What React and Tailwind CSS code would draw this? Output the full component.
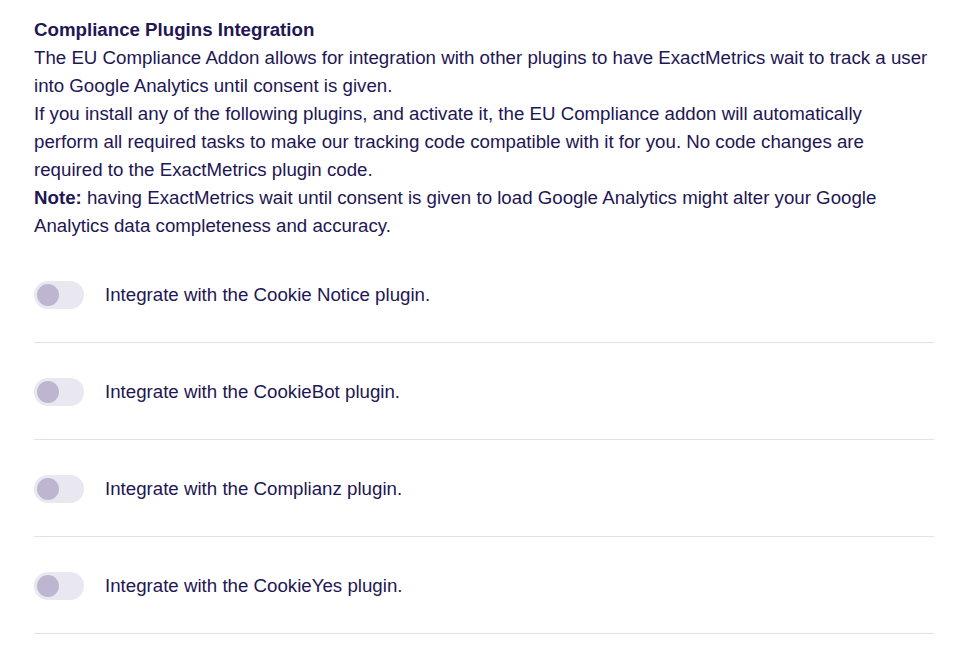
import React from 'react';

const plugins = ['Cookie Notice', 'CookieBot', 'Complianz', 'CookieYes'];

const Toggle = () => (
    <div className="w-[50px] h-[28px] rounded-full bg-[#e9e7f0] flex items-center px-[3px] shrink-0">
        <div className="w-[22px] h-[22px] rounded-full bg-[#bcb6d1]"></div>
    </div>
);

const App = () => {
    return (
        <div className="bg-white min-h-screen pl-[34px] pt-[16px] text-[#221654] text-[18.7px] leading-[28px]" style={{ fontFamily: '"Liberation Sans", Arial, sans-serif' }}>
            <div className="w-[900px]">
                <div className="w-[895px]">
                    <h2 className="font-bold">Compliance Plugins Integration</h2>
                    <p>The EU Compliance Addon allows for integration with other plugins to have ExactMetrics wait to track a user into Google Analytics until consent is given.</p>
                    <p>If you install any of the following plugins, and activate it, the EU Compliance addon will automatically perform all required tasks to make our tracking code compatible with it for you. No code changes are required to the ExactMetrics plugin code.</p>
                    <p><strong>Note:</strong> having ExactMetrics wait until consent is given to load Google Analytics might alter your Google Analytics data completeness and accuracy.</p>
                </div>

                <div className="mt-[6px]">
                    {plugins.map((name) => (
                        <div key={name} className="flex items-center gap-[21px] pt-[35px] pb-[33px] border-b border-[#d8e4ef]">
                            <Toggle />
                            <span>Integrate with the {name} plugin.</span>
                        </div>
                    ))}
                </div>
            </div>
        </div>
    );
};

export default App;
